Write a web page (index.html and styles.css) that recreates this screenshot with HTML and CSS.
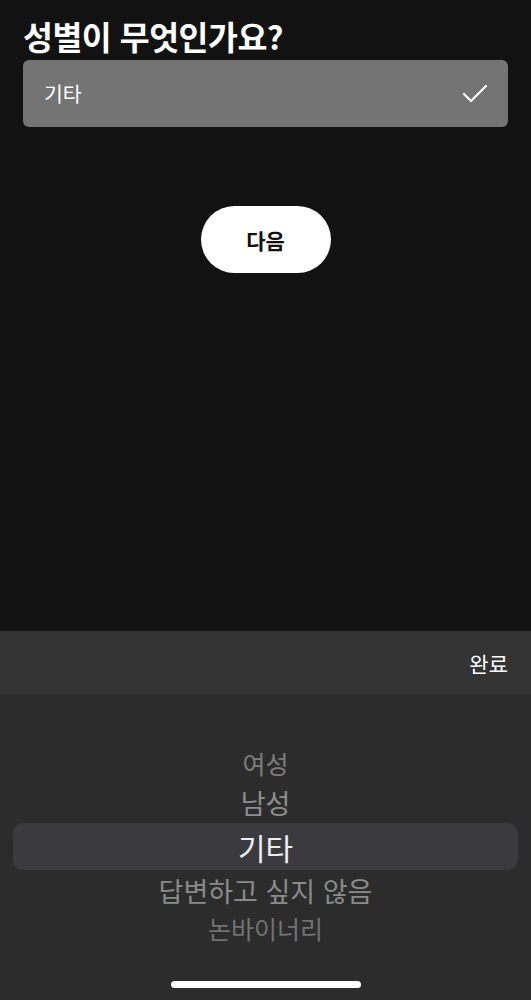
FILE: index.html
```html
<!DOCTYPE html>
<html lang="ko">
<head>
<meta charset="utf-8">
<link rel="stylesheet" href="styles.css">
</head>
<body>
<div class="screen">
  <main class="main">
    <h1 class="title">성별이 무엇인가요?</h1>
    <div class="field">
      <span class="field-text">기타</span>
      <svg class="check" width="26" height="22" viewBox="0 0 26 22"><polyline points="2,11 9,18 24,3" fill="none" stroke="#fff" stroke-width="2.2" stroke-linecap="round" stroke-linejoin="round"/></svg>
    </div>
    <div class="btn-wrap"><button class="next">다음</button></div>
  </main>
  <section class="sheet">
    <div class="toolbar"><span class="done">완료</span></div>
    <div class="picker">
      <div class="row r-far">여성</div>
      <div class="row r-near">남성</div>
      <div class="row r-sel">기타</div>
      <div class="row r-near2">답변하고 싶지 않음</div>
      <div class="row r-far2">논바이너리</div>
    </div>
    <div class="home"><div class="home-bar"></div></div>
  </section>
</div>
</body>
</html>
```
FILE: styles.css
```css
* { box-sizing: border-box; }
html, body { margin: 0; padding: 0; background: #121212; }
body { font-family: "Noto Sans CJK KR", "Noto Sans", sans-serif; color: #fff; }
.screen { width: 531px; height: 1000px; display: flex; flex-direction: column; overflow: hidden; }
.main { flex: 1; padding: 14px 23px 0 23px; display: flex; flex-direction: column; }
.title { margin: 0 0 2px; font-size: 32.5px; font-weight: 700; line-height: 44px; letter-spacing: -0.5px; }
.field { margin-top: 0; height: 67px; background: #747474; border-radius: 6px; display: flex; align-items: center; justify-content: space-between; padding: 0 20px 0 21px; }
.field-text { font-size: 20.5px; line-height: 1; color: #fff; }
.check { display: block; }
.btn-wrap { display: flex; justify-content: center; margin-top: 79px; }
.next { width: 130px; height: 67px; border: 0; border-radius: 34px; background: #fff; color: #111; font-family: inherit; font-size: 21px; font-weight: 700; padding: 0; }
.sheet { height: 369px; background: #2c2c2c; display: flex; flex-direction: column; }
.toolbar { height: 63px; background: #333333; display: flex; align-items: center; justify-content: flex-end; padding-right: 23px; }
.done { font-size: 21px; color: #fff; }
.picker { padding-top: 50px; display: flex; flex-direction: column; }
.row { display: flex; align-items: center; justify-content: center; line-height: 1; }
.r-far { height: 38px; font-size: 25px; color: #7c7c7c; }
.r-near { height: 41px; font-size: 27px; color: #8e8e8e; }
.r-sel { height: 47px; margin: 0 13px; border-radius: 10px; background: #3b3b3f; font-size: 30px; color: #ececec; }
.r-near2 { height: 40px; font-size: 27px; color: #8a8a8a; }
.r-far2 { height: 36px; font-size: 25px; color: #727272; }
.home { flex: 1; display: flex; align-items: flex-end; justify-content: center; padding-bottom: 12px; }
.home-bar { width: 190px; height: 7px; border-radius: 4px; background: #fff; }
```
